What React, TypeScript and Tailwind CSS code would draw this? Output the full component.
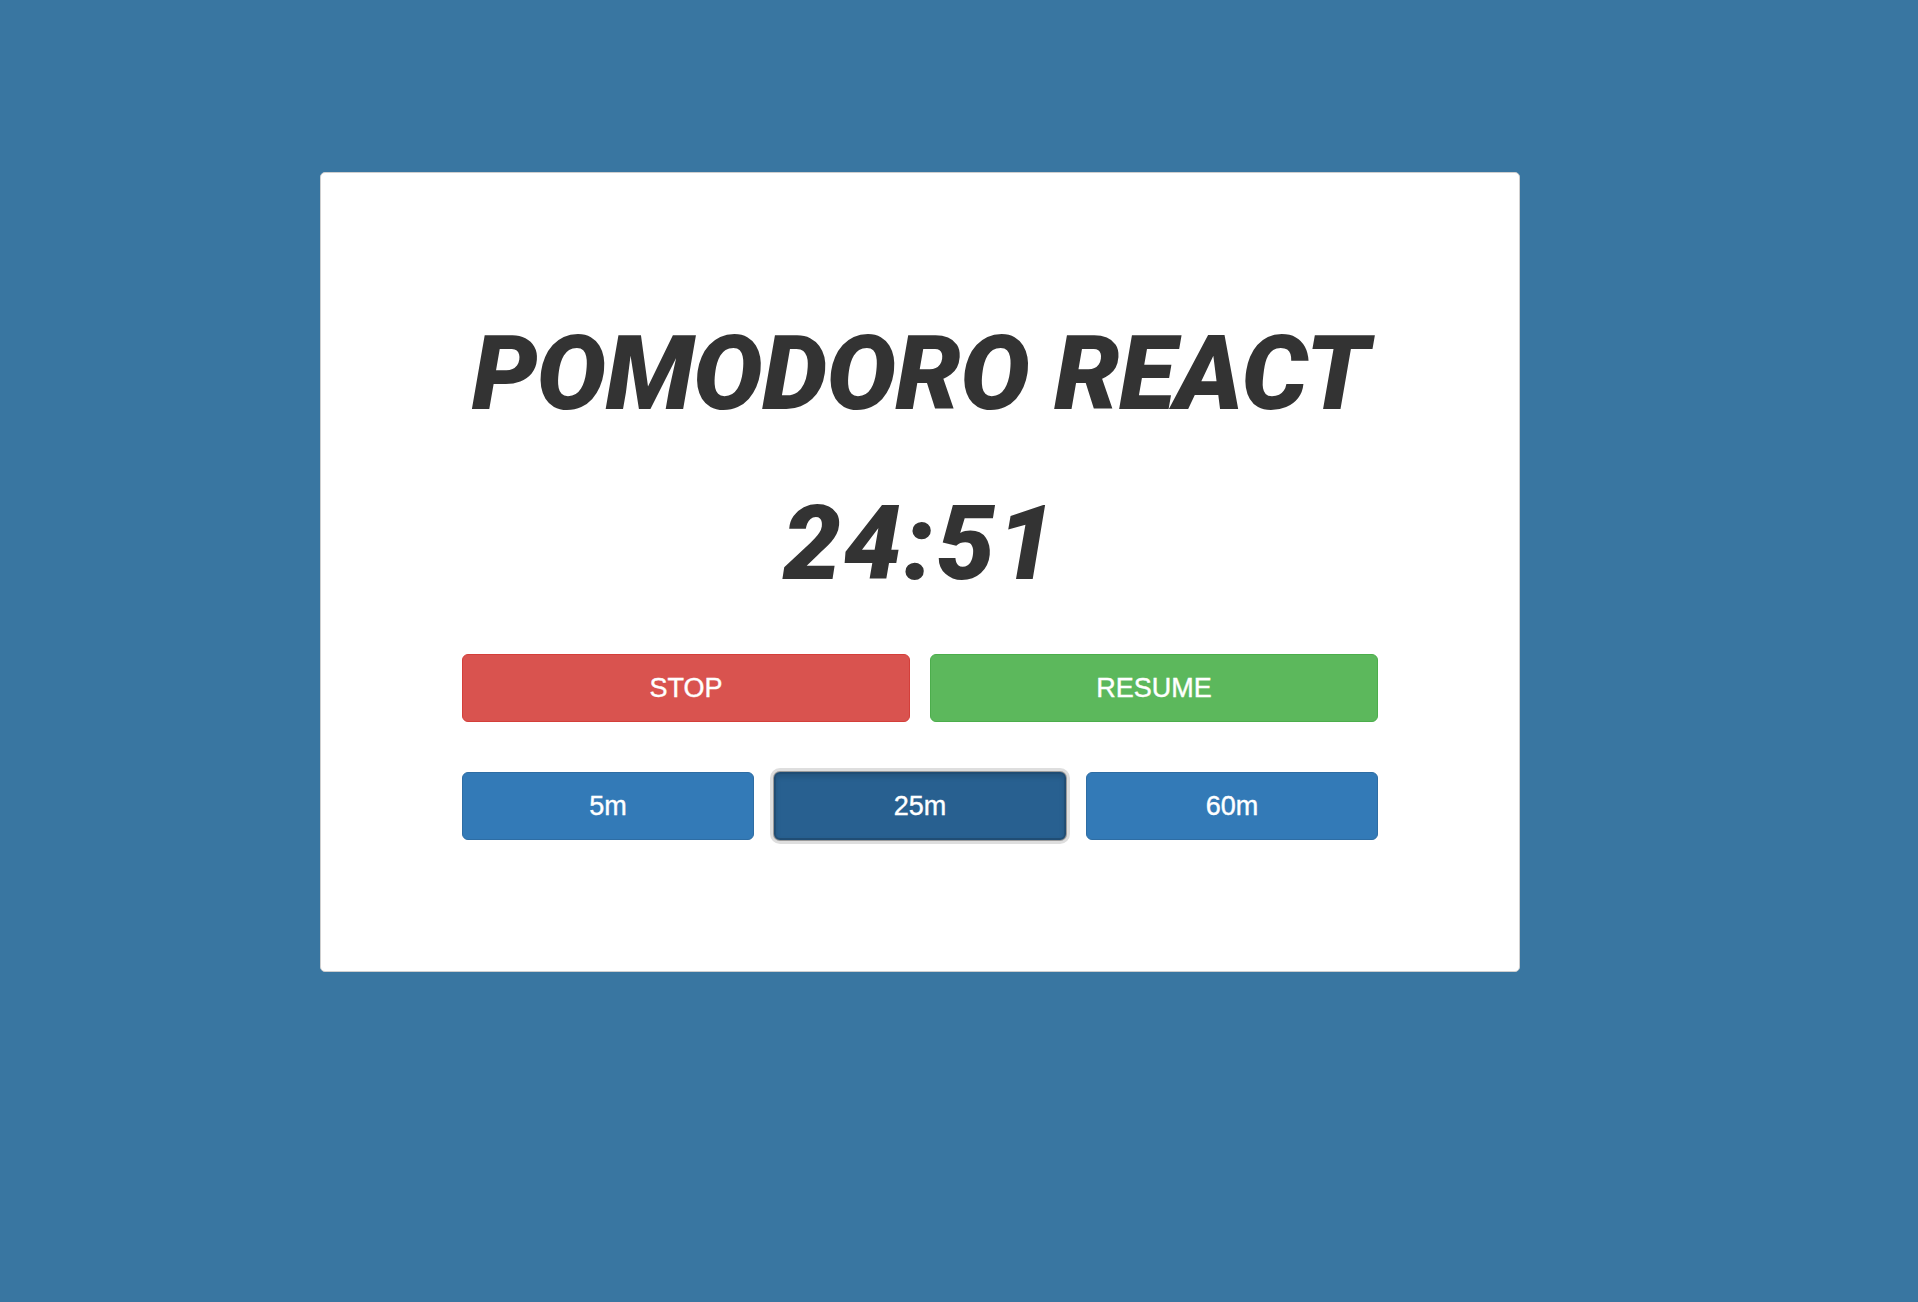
import React from "react";

export default function App() {
  return (
    <div className="min-h-[1302px] w-full bg-[#3976a1] pl-[320px] pt-[172px]">
      <div className="flex h-[800px] w-[1200px] flex-col items-center rounded-[5px] border border-[#cfcfcf] bg-white px-[141px] pt-[149px]">
        <h1
          className="text-[104px] leading-none italic text-[#333333] tracking-[-0.8px] whitespace-nowrap"
          style={{ fontFamily: '"Roboto", "Inter", sans-serif', fontWeight: 900 }}
        >
          POMODORO REACT
        </h1>
        <div
          className="mt-[66px] text-[104px] leading-none italic text-[#333333] tracking-[2px]"
          style={{ fontFamily: '"Roboto", "Inter", sans-serif', fontWeight: 900 }}
        >
          24:51
        </div>
        <div
          className="mt-[58px] grid w-full grid-cols-2 gap-[20px]"
          style={{ fontFamily: '"Liberation Sans", Arial, sans-serif' }}
        >
          <button className="h-[68px] rounded-[6px] border border-[#d43f3a] bg-[#d9534f] text-[27px] text-white [-webkit-text-stroke:0.4px_white]">
            STOP
          </button>
          <button className="h-[68px] rounded-[6px] border border-[#4cae4c] bg-[#5cb85c] text-[27px] text-white [-webkit-text-stroke:0.4px_white]">
            RESUME
          </button>
        </div>
        <div
          className="mt-[50px] grid w-full grid-cols-3 gap-[20px]"
          style={{ fontFamily: '"Liberation Sans", Arial, sans-serif' }}
        >
          <button className="h-[68px] rounded-[6px] border border-[#2e6da4] bg-[#337ab7] text-[27px] text-white [-webkit-text-stroke:0.4px_white]">
            5m
          </button>
          <button className="h-[68px] rounded-[6px] border-2 border-[#204d74] bg-[#286090] text-[27px] text-white [-webkit-text-stroke:0.4px_white] shadow-[0_0_0_1px_#9a9a9a,0_0_0_4px_#dedede,inset_0_3px_5px_rgba(0,0,0,0.125)]">
            25m
          </button>
          <button className="h-[68px] rounded-[6px] border border-[#2e6da4] bg-[#337ab7] text-[27px] text-white [-webkit-text-stroke:0.4px_white]">
            60m
          </button>
        </div>
      </div>
    </div>
  );
}
